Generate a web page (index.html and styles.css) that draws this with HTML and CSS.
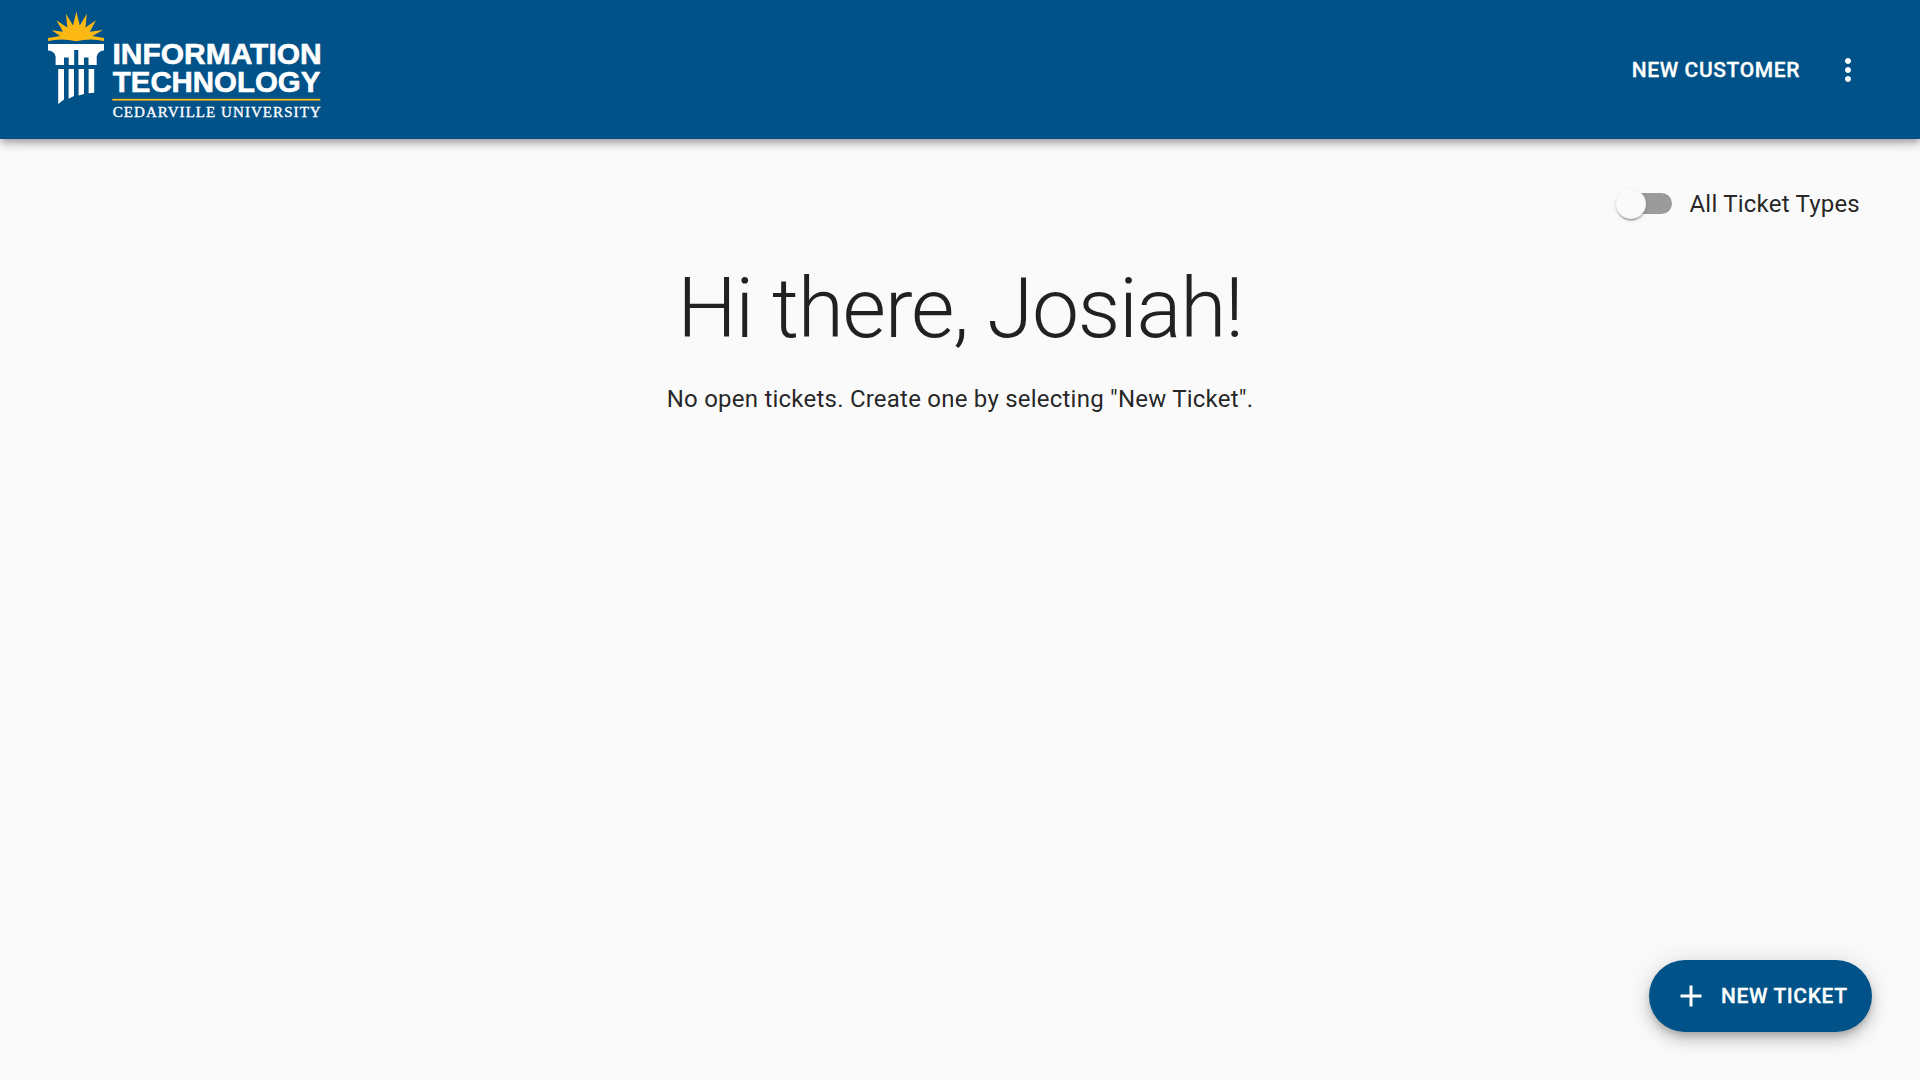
FILE: index.html
```html
<!DOCTYPE html>
<html lang="en">
<head>
<meta charset="utf-8">
<title>Information Technology Tickets</title>
<link rel="stylesheet" href="styles.css">
</head>
<body>
<header class="app-bar">
  <svg class="logo" width="288" height="120" viewBox="40 5 288 120" role="img" aria-label="Information Technology, Cedarville University">
    <path class="gold" d="M48 38 L60 36 L51.8 30.2 L63 31.8 L56.4 20.3 L67.3 27.5 L66 13.8 L73 25.5 L76.4 11.5 L79.8 25.5 L86.8 13.8 L85.5 27.5 L96 20.3 L89.8 31.8 L103 29.9 L92.5 36 L104 38 V41 Q90 37.8 76.3 41.2 Q62 37.8 48 41 Z"/>
    <path class="white" d="M48 44 H104 V50.5 Q97.5 51 96.7 57 V65 H88.5 V57.6 H84 V65 H78.3 V50 H74.2 V65 H68.7 V57.6 H64 V65 H55.6 V57 Q55 51 48 50.5 Z M58.2 69 H64 V99.5 L58.2 104 Z M68.6 69 H74 V96 L68.6 98.7 Z M78.6 69 H84 V94 L78.6 95.5 Z M88.6 69 H94.2 V92.8 L88.6 93.3 Z"/>
    <text class="logo-name" x="112.5" y="64.4" textLength="209.2" lengthAdjust="spacingAndGlyphs">INFORMATION</text>
    <text class="logo-name" x="112.8" y="92.4" textLength="207.5" lengthAdjust="spacingAndGlyphs">TECHNOLOGY</text>
    <rect class="gold" x="112.3" y="98.8" width="208" height="1.8"/>
    <text class="logo-school" x="112.7" y="116.6" textLength="208">CEDARVILLE UNIVERSITY</text>
  </svg>
  <div class="actions">
    <button class="text-button">NEW CUSTOMER</button>
    <button class="icon-button" aria-label="More">
      <svg class="icon" viewBox="0 0 24 24"><path d="M12 8c1.1 0 2-.9 2-2s-.9-2-2-2-2 .9-2 2 .9 2 2 2zm0 2c-1.1 0-2 .9-2 2s.9 2 2 2 2-.9 2-2-.9-2-2-2zm0 6c-1.1 0-2 .9-2 2s.9 2 2 2 2-.9 2-2-.9-2-2-2z"/></svg>
    </button>
  </div>
</header>
<main class="content">
  <label class="filter">
    <span class="switch"><span class="thumb"></span></span>
    <span>All Ticket Types</span>
  </label>
  <h1 class="greeting">Hi there, Josiah!</h1>
  <p class="message">No open tickets. Create one by selecting "New Ticket".</p>
</main>
<button class="fab">
  <svg class="icon" viewBox="0 0 24 24"><path d="M19 13h-6v6h-2v-6H5v-2h6V5h2v6h6v2z"/></svg>
  <span>NEW TICKET</span>
</button>
</body>
</html>
```
FILE: styles.css
```css
* { box-sizing: border-box; }
body {
  margin: 0;
  height: 100vh;
  overflow: hidden;
  background: #fafafa;
  color: rgba(0, 0, 0, 0.87);
  font-family: Roboto, sans-serif;
}
button {
  border: 0;
  color: #fff;
  font: 500 21px/36px Roboto, sans-serif;
  letter-spacing: 0.02857em;
  white-space: nowrap;
  -webkit-text-stroke: 0.3px #fff;
}
.icon { width: 36px; height: 36px; fill: currentColor; }
.app-bar {
  position: relative;
  display: flex;
  justify-content: space-between;
  height: 139px;
  padding: 5px 36px 0 40px;
  background: #005288;
  box-shadow: 0 3px 6px -1.5px rgba(0,0,0,.2), 0 6px 7.5px rgba(0,0,0,.14), 0 1.5px 15px rgba(0,0,0,.12);
}
.gold { fill: #fdb913; }
.white { fill: #fff; }
.logo-name { fill: #fff; stroke: #fff; stroke-width: .6px; font: bold 29.6px "Liberation Sans", Arial, sans-serif; }
.logo-school { fill: #fff; stroke: #fff; stroke-width: .35px; font: 15px "Liberation Serif", serif; }
.actions { display: flex; align-items: center; height: 130px; }
.text-button { padding: 9px 12px; background: none; }
.icon-button { display: flex; padding: 18px; background: none; }
.content { display: flex; flex-direction: column; align-items: center; }
.filter {
  display: flex;
  align-items: center;
  gap: 18px;
  align-self: flex-end;
  margin: 47px 60px 0 0;
  font-size: 24px;
  line-height: 36px;
  letter-spacing: 0.00938em;
}
.switch {
  display: flex;
  align-items: center;
  width: 51px;
  height: 21px;
  margin: 0 -1px 1px 0;
  border-radius: 10.5px;
  background: #9b9b9b;
}
.thumb {
  flex: none;
  width: 30px;
  height: 30px;
  margin-left: -5px;
  border-radius: 50%;
  background: #fafafa;
  box-shadow: 0 3px 1.5px -1.5px rgba(0,0,0,.2), 0 1.5px 1.5px rgba(0,0,0,.14), 0 1.5px 4.5px rgba(0,0,0,.12);
}
.greeting {
  margin: 36px 0 0;
  font-size: 84px;
  font-weight: 300;
  line-height: 102px;
  letter-spacing: -0.01562em;
}
.message {
  margin: 21px 0 0;
  font-size: 24px;
  line-height: 36px;
  letter-spacing: 0.00938em;
}
.fab {
  position: absolute;
  right: 48px;
  bottom: 48px;
  display: flex;
  align-items: center;
  gap: 12px;
  width: 223px;
  height: 72px;
  padding: 0 24px;
  border-radius: 36px;
  background: #005288;
  box-shadow: 0 4.5px 7.5px -1.5px rgba(0,0,0,.2), 0 9px 15px rgba(0,0,0,.14), 0 1.5px 27px rgba(0,0,0,.12);
}
```
